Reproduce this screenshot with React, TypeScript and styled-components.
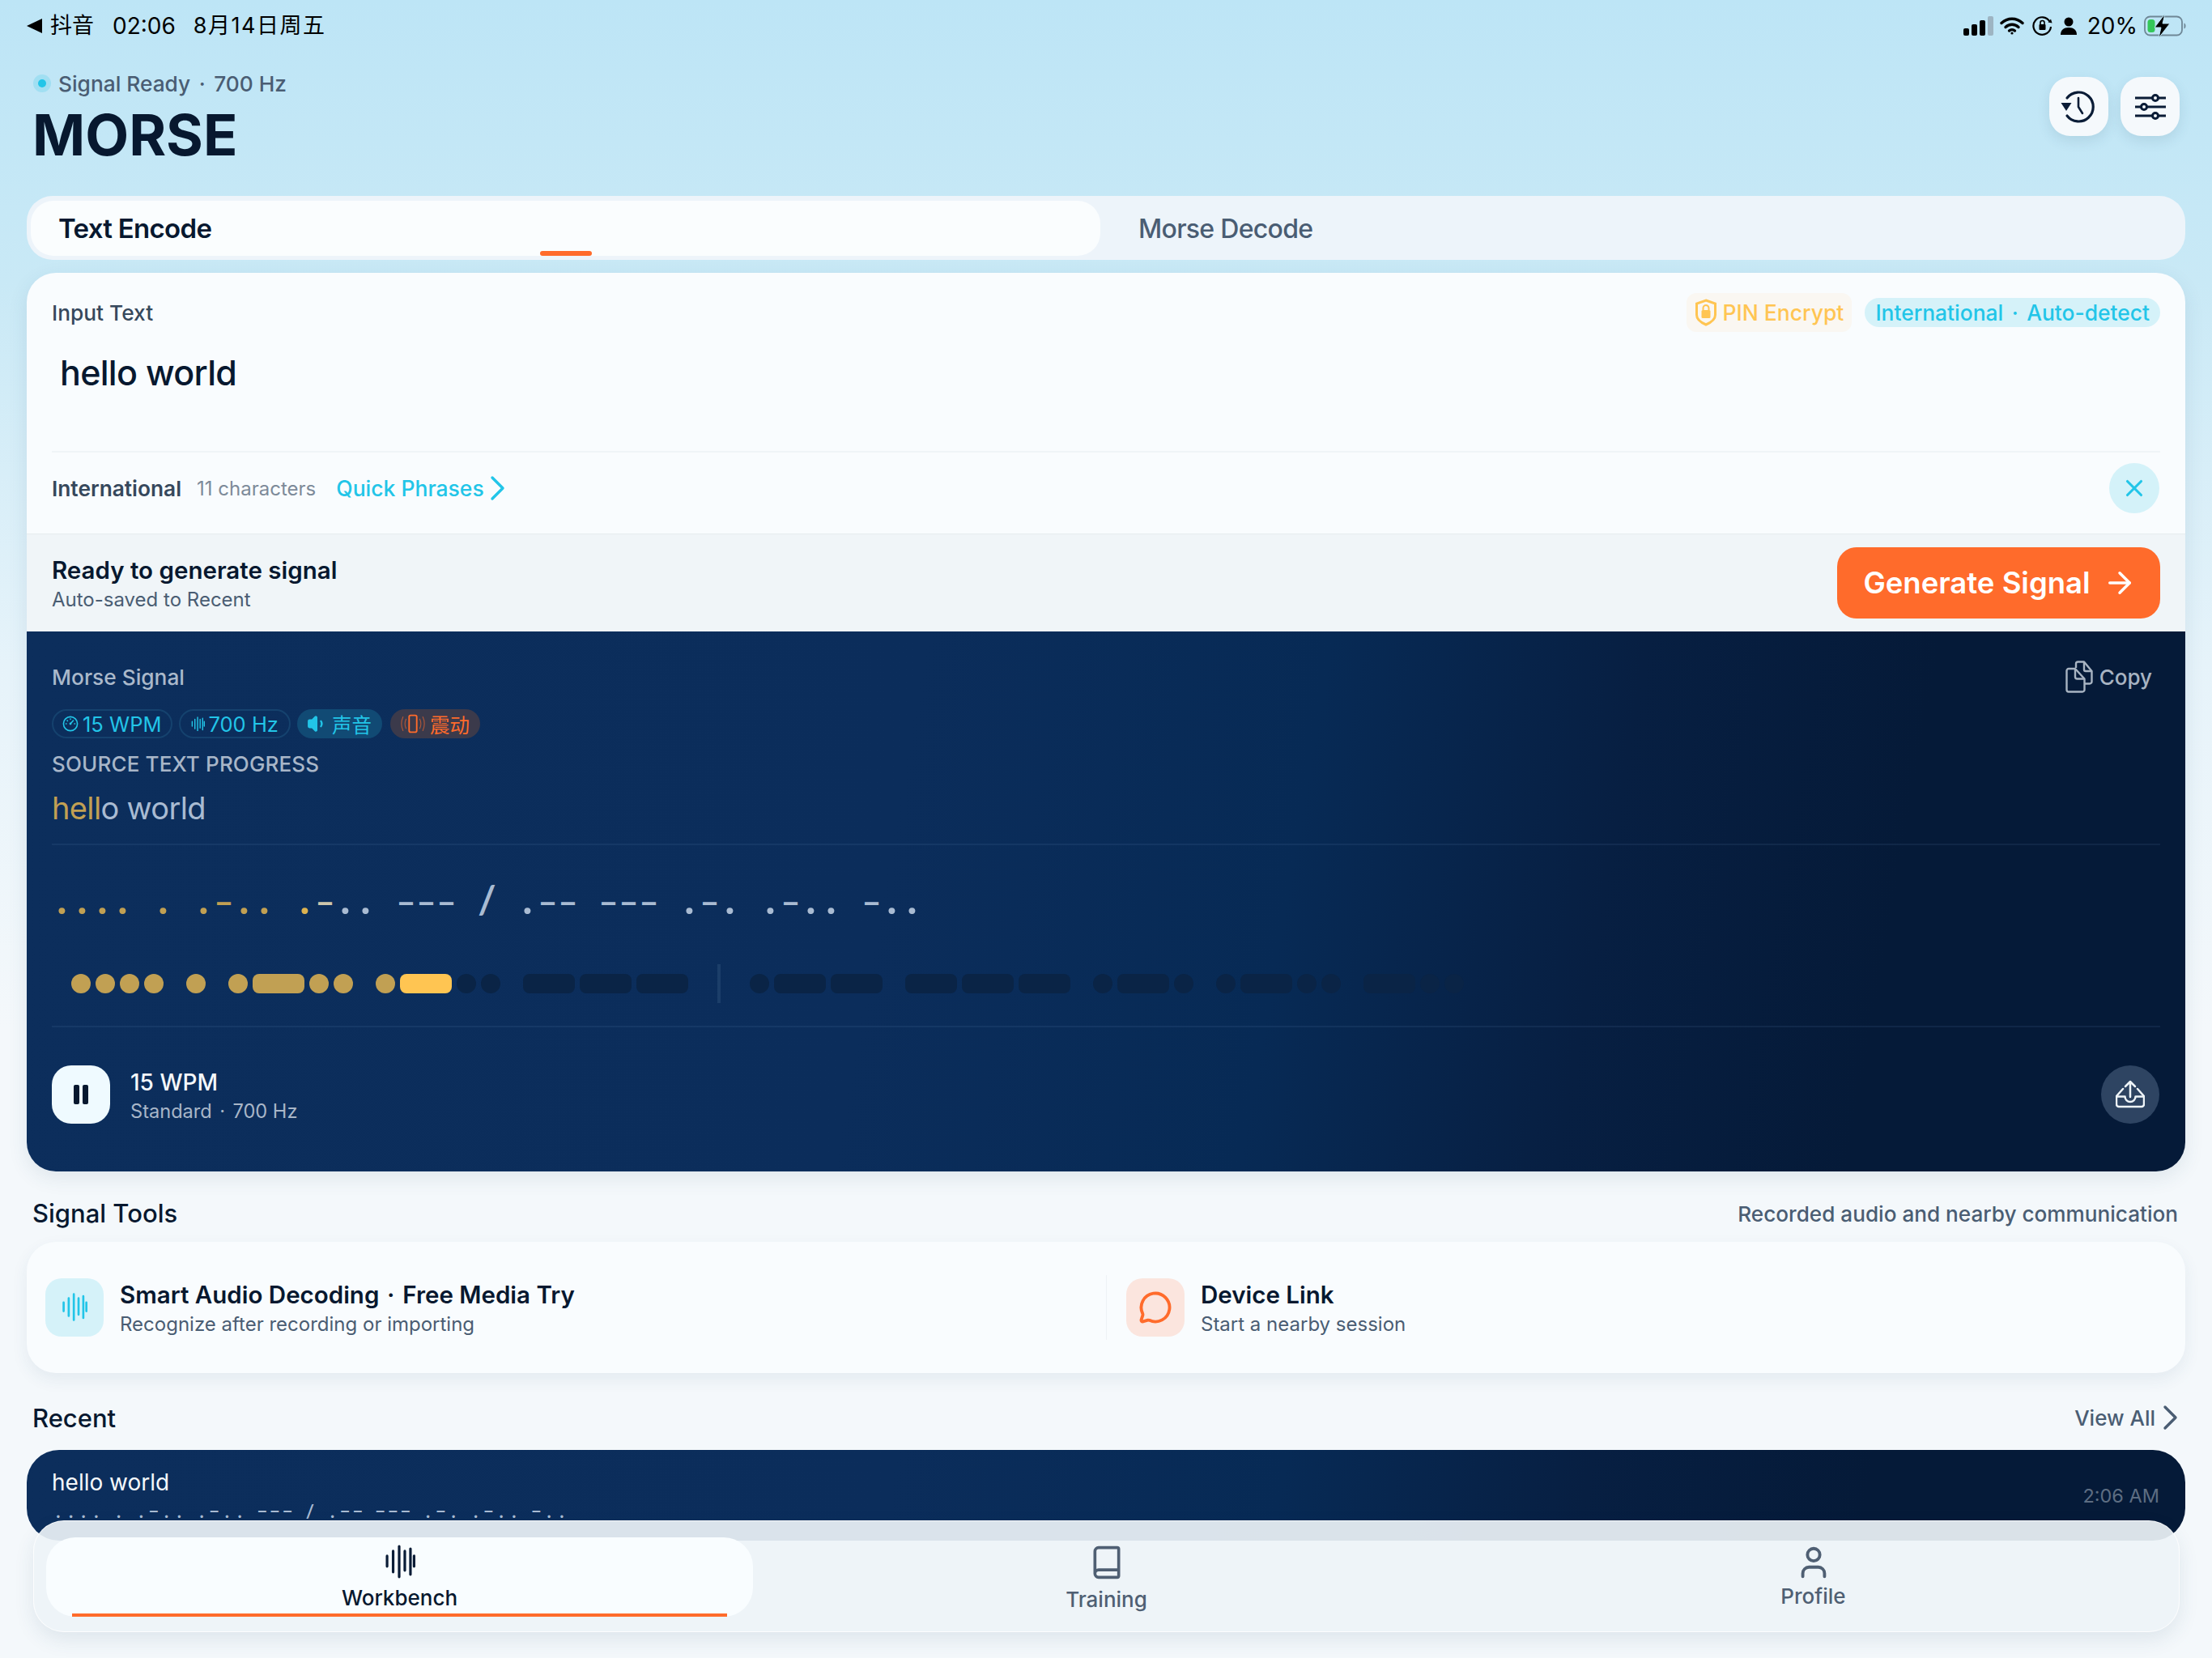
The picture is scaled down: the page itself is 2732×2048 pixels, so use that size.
import { Fragment } from 'react';
import styled, { createGlobalStyle } from 'styled-components';
import { ArrowRight, Book, MessageCircle, User, Volume1, X } from 'lucide-react';

const GlobalStyle = createGlobalStyle`
  html, body {
    margin: 0;
    padding: 0;
    background: #f4f8fb;
  }
  * {
    box-sizing: border-box;
  }
`;

const CJK = `Inter, "Noto Sans CJK SC", sans-serif`;

const WORDS = [
  ['....', '.', '.-..', '.-..', '---'],
  ['.--', '---', '.-.', '.-..', '-..'],
];
const MORSE_TEXT = '.... . .-.. .-.. --- / .-- --- .-. .-.. -..';

// how far playback got: index into MORSE_TEXT and into the flat list of bars
const charTone = (i: number) => {
  if (i < 12) return 'played';
  if (i === 12) return 'current';
  if (i === 13) return 'fresh';
  return 'idle';
};

const toGlyph = (c: string) => (c === '-' ? '−' : c === ' ' ? '\u00a0' : c);

const WaveIcon = ({ size, color }: { size: number; color: string }) => (
  <svg width={size} height={size * 1.1} viewBox="0 0 38 42" fill="none" stroke={color} strokeWidth="3.2" strokeLinecap="round">
    <path d="M3 14v13M10.500 8v26M18 2v38M25 8v24M32 5v32M36.500 14v13" />
  </svg>
);

const Chevron = ({ color }: { color: string }) => (
  <svg width="20" height="32" viewBox="0 0 20 32" fill="none" stroke={color} strokeWidth="3.4" strokeLinecap="round" strokeLinejoin="round">
    <path d="M4 3l13 13L4 29" />
  </svg>
);

const App = () => {
  let barIndex = 0;
  return (
    <>
      <GlobalStyle />
      <Page>
        <StatusBar>
          <StatusGroup>
            <BackTriangle />
            <StatusText>抖音</StatusText>
            <StatusTime>02:06</StatusTime>
            <StatusDate>8月14日周五</StatusDate>
          </StatusGroup>
          <StatusGroupRight>
            <SignalBars width="38" height="24" viewBox="0 0 38 24">
              <rect x="0" y="15" width="7" height="9" rx="2" fill="#000" />
              <rect x="10" y="10" width="7" height="14" rx="2" fill="#000" />
              <rect x="20" y="5" width="7" height="19" rx="2" fill="#000" />
              <rect x="30" y="0" width="7" height="24" rx="2" fill="#9db4c2" />
            </SignalBars>
            <svg width="30" height="24" viewBox="0 0 30 24" fill="none" stroke="#000" strokeWidth="3.4" strokeLinecap="round">
              <path d="M2 8.500c7.500-7 18.500-7 26 0" />
              <path d="M7 13.500c4.700-4.300 11.300-4.300 16 0" />
              <path d="M11.500 18c2-1.700 5-1.700 7 0" />
              <circle cx="15" cy="21" r="1.600" fill="#000" stroke="none" />
            </svg>
            <svg width="25" height="26" viewBox="0 0 25 26" fill="none" stroke="#000" strokeWidth="2.200">
              <path d="M21.500 7.500A10.800 10.800 0 1 0 23 14" />
              <path d="M24.500 9.500l-5-1 3.500-4z" fill="#000" stroke="none" />
              <rect x="8.500" y="11" width="8" height="7" rx="1" fill="#000" stroke="none" />
              <path d="M10 11V9a2.500 2.500 0 0 1 5 0v2" strokeWidth="1.600" />
            </svg>
            <svg width="20" height="22" viewBox="0 0 20 22" fill="#000">
              <circle cx="10" cy="6" r="5.500" />
              <path d="M0 22c0-6 4-9 10-9s10 3 10 9z" />
            </svg>
            <StatusPercent>20%</StatusPercent>
            <svg width="52" height="30" viewBox="0 0 52 30" fill="none">
              <rect x="1" y="3.500" width="46" height="23" rx="6.500" stroke="#6f8796" strokeWidth="1.800" />
              <rect x="4.500" y="7" width="9" height="16" rx="3.500" fill="#34c759" />
              <path d="M49.500 11.500c1.500.5 2 2 2 3.500s-.5 3-2 3.500z" fill="#6f8796" />
              <path d="M26 0L13 17h8l-3 13 14-18h-9z" fill="#000" stroke="#bee6f7" strokeWidth="1" />
            </svg>
          </StatusGroupRight>
        </StatusBar>

        <Header>
          <div>
            <SignalState>
              <SignalDot />
              <span>
                Signal Ready<Sep>·</Sep>700 Hz
              </span>
            </SignalState>
            <Title>MORSE</Title>
          </div>
          <HeaderActions>
            <RoundSquare>
              <svg width="46" height="44" viewBox="2 0 46 44" fill="none" stroke="#0a1c36" strokeWidth="3.200" strokeLinecap="round" strokeLinejoin="round">
                <path d="M10 11A18 18 0 1 1 10 33" />
                <path d="M2.500 17h13L9 27z" fill="#0a1c36" stroke="none" />
                <path d="M24 11v11l5 8" strokeWidth="2.600" />
              </svg>
            </RoundSquare>
            <RoundSquare>
              <svg width="38" height="32" viewBox="0 0 38 32" fill="none" stroke="#0a1c36" strokeWidth="3">
                <path d="M0 5h21M29 5h9M0 16h7M15 16h23M0 27h21M29 27h9" />
                <circle cx="25" cy="5" r="3.500" />
                <circle cx="11" cy="16" r="3.500" />
                <circle cx="25" cy="27" r="3.500" />
              </svg>
            </RoundSquare>
          </HeaderActions>
        </Header>

        <TabTrack>
          <ActiveTab>
            Text Encode
            <TabIndicator />
          </ActiveTab>
          <IdleTab>Morse Decode</IdleTab>
        </TabTrack>

        <MainCard>
          <InputSection>
            <InputHead>
              <FieldLabel>Input Text</FieldLabel>
              <HeadBadges>
                <PinBadge>
                  <svg width="28" height="34" viewBox="0 0 28 34" fill="none">
                    <path d="M14 2l11.500 4v14c0 5-4.500 9-11.500 12C7 29 2.500 25 2.500 20V6z" stroke="#ffc552" strokeWidth="3" />
                    <rect x="8.500" y="14" width="11" height="10" rx="1.500" fill="#ffc552" />
                    <path d="M10.500 14v-2.500a3.500 3.500 0 0 1 7 0V14" stroke="#ffc552" strokeWidth="2" />
                  </svg>
                  PIN Encrypt
                </PinBadge>
                <ModeBadge>
                  International<Sep>·</Sep>Auto-detect
                </ModeBadge>
              </HeadBadges>
            </InputHead>
            <InputValue>hello world</InputValue>
            <MetaRow>
              <MetaLeft>
                <MetaMode>International</MetaMode>
                <MetaCount>11 characters</MetaCount>
                <QuickLink>
                  Quick Phrases
                  <Chevron color="#22c5e8" />
                </QuickLink>
              </MetaLeft>
              <ClearButton>
                <X size={34} strokeWidth={2.2} />
              </ClearButton>
            </MetaRow>
          </InputSection>

          <ReadyBand>
            <div>
              <ReadyTitle>Ready to generate signal</ReadyTitle>
              <ReadySub>Auto-saved to Recent</ReadySub>
            </div>
            <GenerateButton>
              Generate Signal
              <ArrowRight size={42} strokeWidth={2} />
            </GenerateButton>
          </ReadyBand>

          <SignalPanel>
            <PanelHead>
              <PanelLabel>Morse Signal</PanelLabel>
              <CopyAction>
                <svg width="34" height="40" viewBox="0 0 34 40" fill="none" stroke="#a8b4c2" strokeWidth="2.400" strokeLinejoin="round">
                  <path d="M13 9V4a2.500 2.500 0 0 1 2.500-2.500H23L32.500 13v13a2.500 2.500 0 0 1-2.500 2.500h-6" />
                  <path d="M23 2v9a2 2 0 0 0 2 2h7" />
                  <path d="M1.500 12.500A2.500 2.500 0 0 1 4 10h8l11.500 12.500V36a2.500 2.500 0 0 1-2.500 2.500H4A2.500 2.500 0 0 1 1.500 36z" />
                  <path d="M12 10v10a2.500 2.500 0 0 0 2.500 2.500h9" />
                </svg>
                Copy
              </CopyAction>
            </PanelHead>

            <ChipRow>
              <OutlineChip>
                <svg width="20" height="20" viewBox="0 0 20 20" fill="none" stroke="#22c5e8" strokeWidth="1.600" strokeLinecap="round">
                  <circle cx="10" cy="10" r="8.600" />
                  <path d="M10 10l3.500-4M10 4v.5M4.500 10H5M15 10h.5M6 6l.4.4" />
                  <circle cx="10" cy="10" r="1.400" fill="#22c5e8" stroke="none" />
                </svg>
                15 WPM
              </OutlineChip>
              <OutlineChip $wide>
                <WaveIcon size={17} color="#22c5e8" />
                700 Hz
              </OutlineChip>
              <SoundChip>
                <Volume1 size={26} strokeWidth={2} fill="#22c5e8" />
                声音
              </SoundChip>
              <VibrateChip>
                <svg width="32" height="26" viewBox="-2 0 34 26" fill="none" stroke="#ff6b2b" strokeLinecap="round">
                  <rect x="10" y="2" width="10" height="22" rx="2" strokeWidth="2" />
                  <path d="M6 7c-1.700 3.500-1.700 8.500 0 12M2 4c-2.500 5.500-2.500 12.500 0 18M24 7c1.700 3.500 1.700 8.500 0 12M28 4c2.500 5.500 2.500 12.500 0 18" strokeWidth="1.200" opacity="0.6" />
                </svg>
                震动
              </VibrateChip>
            </ChipRow>

            <ProgressLabel>SOURCE TEXT PROGRESS</ProgressLabel>
            <SourceText>
              <SourceDone>hell</SourceDone>o world
            </SourceText>
            <PanelRule />

            <MorseLine>
              {MORSE_TEXT.split('').map((c, i) => (
                <MorseChar key={i} $tone={charTone(i)} $glyph={c}>
                  {toGlyph(c)}
                </MorseChar>
              ))}
            </MorseLine>

            <BarRow>
              {WORDS.map((word, w) => (
                <Fragment key={w}>
                  {w > 0 && <WordBreak />}
                  {word.map((letter, l) => (
                    <LetterGroup key={l}>
                      {letter.split('').map((sym, s) => {
                        const idx = barIndex++;
                        const state = idx < 10 ? 'played' : idx === 10 ? 'current' : 'idle';
                        return <SignalBar key={s} $dash={sym === '-'} $state={state} />;
                      })}
                    </LetterGroup>
                  ))}
                </Fragment>
              ))}
            </BarRow>
            <PanelRuleLower />

            <PlayerRow>
              <PlayerLeft>
                <PauseButton>
                  <PauseBar />
                  <PauseBar />
                </PauseButton>
                <div>
                  <PlayerSpeed>15 WPM</PlayerSpeed>
                  <PlayerSub>
                    Standard<Sep>·</Sep>700 Hz
                  </PlayerSub>
                </div>
              </PlayerLeft>
              <ShareButton>
                <svg width="36" height="36" viewBox="0 0 36 36" fill="none" stroke="#eef4f8" strokeWidth="2.500" strokeLinecap="round" strokeLinejoin="round">
                  <path d="M18 21V2M12 8l6-6 6 6" />
                  <path d="M9 11L1 20v10a3 3 0 0 0 3 3h28a3 3 0 0 0 3-3V20l-8-9" />
                  <path d="M1 20.500h10.500a6.500 6.500 0 0 0 13 0H35" />
                </svg>
              </ShareButton>
            </PlayerRow>
          </SignalPanel>
        </MainCard>

        <SectionHead>
          <SectionTitle>Signal Tools</SectionTitle>
          <SectionNote>Recorded audio and nearby communication</SectionNote>
        </SectionHead>

        <ToolCard>
          <ToolItem>
            <ToolIcon $tone="cyan">
              <WaveIcon size={32} color="#22c5e8" />
            </ToolIcon>
            <div>
              <ToolTitle>
                Smart Audio Decoding<ToolSep>·</ToolSep>Free Media Try
              </ToolTitle>
              <ToolSub>Recognize after recording or importing</ToolSub>
            </div>
          </ToolItem>
          <ToolItem $divided>
            <ToolIcon $tone="orange">
              <MessageCircle size={42} strokeWidth={2.2} color="#ff6b2b" />
            </ToolIcon>
            <div>
              <ToolTitle>Device Link</ToolTitle>
              <ToolSub>Start a nearby session</ToolSub>
            </div>
          </ToolItem>
        </ToolCard>

        <RecentHead>
          <SectionTitle>Recent</SectionTitle>
          <ViewAll>
            View All
            <Chevron color="#4a5d73" />
          </ViewAll>
        </RecentHead>

        <RecentCard>
          <div>
            <RecentText>hello world</RecentText>
            <RecentMorse>
              {MORSE_TEXT.split('').map((c, i) => (
                <RecentChar key={i} $space={c === ' '}>
                  {toGlyph(c)}
                </RecentChar>
              ))}
            </RecentMorse>
          </div>
          <RecentTime>2:06 AM</RecentTime>
        </RecentCard>

        <BottomNav>
          <NavItem $active>
            <WaveIcon size={38} color="#0a1c36" />
            <NavLabel $active>Workbench</NavLabel>
            <NavUnderline />
          </NavItem>
          <NavItem>
            <Book size={44} strokeWidth={2} color="#4f5f73" />
            <NavLabel>Training</NavLabel>
          </NavItem>
          <NavItem $profile>
            <User size={46} strokeWidth={2} color="#4f5f73" />
            <NavLabel>Profile</NavLabel>
          </NavItem>
        </BottomNav>
      </Page>
    </>
  );
};

const Page = styled.div`
  position: relative;
  width: 2732px;
  height: 2048px;
  overflow: hidden;
  font-family: Inter, sans-serif;
  background: linear-gradient(180deg, #bde5f6 0%, #c9e9f6 17%, #e6f3fa 40%, #f4f8fb 62%, #f4f8fb 100%);
`;

const Sep = styled.span`
  margin: 0 0.4em;
`;

const ToolSep = styled(Sep)`
  margin: 0 0.33em;
`;

const StatusBar = styled.div`
  display: flex;
  align-items: center;
  justify-content: space-between;
  height: 64px;
  padding: 0 32px 0 33px;
`;

const StatusGroup = styled.div`
  display: flex;
  align-items: center;
  color: #000;
`;

const StatusGroupRight = styled(StatusGroup)`
  gap: 10px;
`;

const SignalBars = styled.svg`
  margin-right: -3px;
`;

const BackTriangle = styled.span`
  width: 0;
  height: 0;
  margin-right: 10px;
  border-top: 9px solid transparent;
  border-bottom: 9px solid transparent;
  border-right: 19px solid #000;
`;

const StatusText = styled.span`
  font-family: ${CJK};
  font-size: 27px;
  line-height: 34px;
`;

const StatusDate = styled(StatusText)`
  letter-spacing: 1.5px;
`;

const StatusTime = styled.span`
  margin: 0 22px 0 23px;
  font-size: 28px;
  line-height: 34px;
`;

const StatusPercent = styled.span`
  margin: 0 -2px 0 3px;
  font-size: 28px;
  line-height: 34px;
`;

const Header = styled.div`
  display: flex;
  justify-content: space-between;
  height: 178px;
  padding: 21px 40px 0 40px;
`;

const SignalState = styled.div`
  display: flex;
  align-items: center;
  gap: 11px;
  height: 36px;
  padding-left: 1px;
  font-size: 26.3px;
  font-weight: 500;
  color: #4a5d73;
`;

const SignalDot = styled.span`
  width: 10px;
  height: 10px;
  margin: 0 4px 0 6px;
  border-radius: 50%;
  background: #22c5e8;
  box-shadow: 0 0 0 6px rgba(34, 197, 232, 0.2);
`;

const Title = styled.h1`
  margin: 8px 0 0;
  font-size: 70px;
  line-height: 76px;
  font-weight: 700;
  color: #07182f;
`;

const HeaderActions = styled.div`
  display: flex;
  gap: 15px;
  padding-top: 10px;
`;

const RoundSquare = styled.button`
  display: flex;
  align-items: center;
  justify-content: center;
  width: 73px;
  height: 73px;
  padding: 0;
  border: none;
  border-radius: 26px;
  background: #f5f9fc;
  box-shadow: 0 6px 16px rgba(40, 80, 110, 0.12);
`;

const TabTrack = styled.div`
  display: flex;
  height: 79px;
  margin: 0 33px;
  padding: 6px 5px 5px;
  border-radius: 32px;
  background: #edf4fa;
`;

const ActiveTab = styled.div`
  position: relative;
  display: flex;
  align-items: center;
  width: 1321px;
  padding-left: 34px;
  border-radius: 28px;
  background: #fafdfe;
  font-size: 33px;
  letter-spacing: -0.7px;
  font-weight: 600;
  color: #07182f;
`;

const TabIndicator = styled.span`
  position: absolute;
  left: 629px;
  bottom: 0;
  width: 64px;
  height: 6px;
  border-radius: 3px;
  background: #ff6b2b;
`;

const IdleTab = styled.div`
  display: flex;
  align-items: center;
  flex: 1;
  padding-left: 47px;
  font-size: 32px;
  letter-spacing: -0.7px;
  font-weight: 500;
  color: #4a5d73;
`;

const MainCard = styled.section`
  margin: 16px 33px 0;
  border-radius: 36px;
  overflow: hidden;
  background: #f9fcfe;
  box-shadow: 0 8px 24px rgba(40, 80, 110, 0.1);
`;

const InputSection = styled.div`
  height: 322px;
  padding: 25px 31px 0;
`;

const InputHead = styled.div`
  display: flex;
  align-items: center;
  justify-content: space-between;
  height: 48px;
`;

const FieldLabel = styled.span`
  font-size: 26.3px;
  font-weight: 500;
  color: #36485c;
`;

const HeadBadges = styled.div`
  display: flex;
  align-items: center;
  gap: 16px;
`;

const PinBadge = styled.span`
  display: flex;
  align-items: center;
  gap: 7px;
  height: 48px;
  padding: 0 10px;
  border-radius: 12px;
  background: #faf7f2;
  font-size: 26.5px;
  font-weight: 500;
  color: #ffc552;
`;

const ModeBadge = styled.span`
  display: flex;
  align-items: center;
  height: 36px;
  padding: 0 13px;
  border-radius: 18px;
  background: #d5f2f9;
  font-size: 26.4px;
  font-weight: 500;
  color: #22c5e8;
`;

const InputValue = styled.div`
  margin: 22px 0 0 10px;
  font-size: 43px;
  letter-spacing: -0.7px;
  line-height: 56px;
  font-weight: 500;
  color: #07182f;
`;

const MetaRow = styled.div`
  display: flex;
  align-items: center;
  justify-content: space-between;
  height: 90px;
  margin-top: 69px;
  border-top: 2px solid #f0f4f7;
`;

const MetaLeft = styled.div`
  display: flex;
  align-items: center;
`;

const MetaMode = styled.span`
  font-size: 26.3px;
  font-weight: 600;
  color: #36485c;
`;

const MetaCount = styled.span`
  margin-left: 19px;
  font-size: 24px;
  color: #7d8a99;
`;

const QuickLink = styled.span`
  display: flex;
  align-items: center;
  gap: 6px;
  margin-left: 25px;
  font-size: 26.5px;
  font-weight: 500;
  color: #22c5e8;
`;

const ClearButton = styled.span`
  display: flex;
  align-items: center;
  justify-content: center;
  width: 62px;
  height: 62px;
  margin-right: 1px;
  border-radius: 50%;
  background: #d4f2f9;
  color: #22c5e8;
`;

const ReadyBand = styled.div`
  display: flex;
  align-items: center;
  justify-content: space-between;
  height: 121px;
  padding: 0 31px;
  background: #f0f5f8;
  border-top: 1px solid #e6ecef;
`;

const ReadyTitle = styled.div`
  margin-top: 1px;
  font-size: 29.5px;
  line-height: 38px;
  font-weight: 600;
  color: #07182f;
`;

const ReadySub = styled.div`
  margin-top: 3px;
  font-size: 24px;
  line-height: 30px;
  color: #4a5d73;
`;

const GenerateButton = styled.button`
  display: flex;
  align-items: center;
  justify-content: center;
  gap: 15px;
  width: 399px;
  height: 88px;
  padding: 0 0 0 3px;
  border: none;
  border-radius: 24px;
  background: #ff6b2b;
  font-family: inherit;
  font-size: 36.5px;
  font-weight: 600;
  color: #fff;
`;

const SignalPanel = styled.div`
  height: 667px;
  padding: 36px 31px 0;
  background: linear-gradient(100deg, #0c2e5c 0%, #0b2d5b 40%, #072a55 58%, #071f42 72%, #051a38 85%, #051a38 100%);
`;

const PanelHead = styled.div`
  display: flex;
  align-items: center;
  justify-content: space-between;
  height: 40px;
`;

const PanelLabel = styled.span`
  font-size: 26.3px;
  font-weight: 500;
  color: #aab9cb;
`;

const CopyAction = styled.span`
  display: flex;
  align-items: center;
  gap: 8px;
  padding-right: 10px;
  font-size: 26px;
  font-weight: 500;
  color: #a8b4c2;
`;

const ChipRow = styled.div`
  display: flex;
  gap: 8px;
  margin-top: 20px;
`;

const OutlineChip = styled.span<{ $wide?: boolean }>`
  display: flex;
  align-items: center;
  gap: 5px;
  height: 36px;
  padding: 0 ${props => (props.$wide ? 13 : 11)}px;
  border: 2px solid #15426e;
  border-radius: 18px;
  font-size: 25.5px;
  color: #22c5e8;
`;

const SoundChip = styled.span`
  display: flex;
  align-items: center;
  gap: 5px;
  height: 36px;
  padding: 0 13px 0 12px;
  border-radius: 18px;
  background: #114a74;
  font-family: ${CJK};
  font-size: 24.5px;
  color: #22c5e8;
`;

const VibrateChip = styled(SoundChip)`
  margin-left: 2px;
  background: #3b3a4b;
  color: #ff6b2b;
`;

const ProgressLabel = styled.div`
  margin-top: 16px;
  font-size: 26px;
  line-height: 32px;
  font-weight: 500;
  letter-spacing: 0.15px;
  color: #a8b6c8;
`;

const SourceText = styled.div`
  margin-top: 13px;
  font-size: 38px;
  letter-spacing: -0.65px;
  line-height: 50px;
  color: #a9bbd2;
`;

const SourceDone = styled.span`
  color: #c1a053;
`;

const PanelRule = styled.div`
  height: 2px;
  margin-top: 19px;
  background: rgba(120, 160, 210, 0.1);
`;

const PanelRuleLower = styled(PanelRule)`
  margin-top: 28px;
`;

const MorseLine = styled.div`
  display: flex;
  align-items: baseline;
  height: 60px;
  margin-top: 35px;
  font-family: Lato, sans-serif;
  line-height: 60px;
`;

const MORSE_COLORS: Record<string, string> = {
  played: '#c1a053',
  current: '#dcb250',
  fresh: '#cdc6ac',
  idle: '#a9bbd2',
};

const MORSE_SIZES: Record<string, string> = {
  '.': 'font-size: 52px; font-weight: 700;',
  '-': 'font-size: 38px; font-weight: 900;',
  '/': 'font-size: 48px; font-weight: 700;',
  ' ': 'font-size: 38px;',
};

const MorseChar = styled.span<{ $tone: string; $glyph: string }>`
  flex: none;
  width: 25px;
  text-align: center;
  ${props => MORSE_SIZES[props.$glyph]}
  color: ${props => MORSE_COLORS[props.$tone]};
`;

const BarRow = styled.div`
  display: flex;
  align-items: center;
  gap: 28px;
  height: 48px;
  margin-top: 52px;
  padding-left: 24px;
`;

const LetterGroup = styled.div`
  display: flex;
  gap: 6px;
`;

const WordBreak = styled.span`
  width: 4px;
  height: 48px;
  margin: 0 8px;
  background: #1b3e69;
`;

const BAR_COLORS: Record<string, string> = {
  played: '#c1a053',
  current: '#ffc552',
  idle: '#0a2446',
};

const SignalBar = styled.span<{ $dash: boolean; $state: string }>`
  width: ${props => (props.$dash ? 64 : 24)}px;
  height: 24px;
  border-radius: ${props => (props.$dash ? 8 : 12)}px;
  background: ${props => BAR_COLORS[props.$state]};
`;

const PlayerRow = styled.div`
  display: flex;
  align-items: center;
  justify-content: space-between;
  height: 72px;
  margin-top: 47px;
`;

const PlayerLeft = styled.div`
  display: flex;
  align-items: center;
  gap: 25px;
`;

const PauseButton = styled.span`
  display: flex;
  align-items: center;
  justify-content: center;
  gap: 4px;
  width: 72px;
  height: 72px;
  border-radius: 24px;
  background: #effaff;
`;

const PauseBar = styled.span`
  width: 7px;
  height: 24px;
  border-radius: 2px;
  background: #07182f;
`;

const PlayerSpeed = styled.div`
  margin-top: 2px;
  font-size: 28px;
  line-height: 38px;
  font-weight: 500;
  color: #f4f8fb;
`;

const PlayerSub = styled.div`
  font-size: 23.6px;
  line-height: 32px;
  margin-top: 1px;
  color: #a8b6c8;
`;

const ShareButton = styled.span`
  display: flex;
  align-items: center;
  justify-content: center;
  width: 72px;
  height: 72px;
  margin-right: 1px;
  border-radius: 50%;
  background: #2e4462;
`;

const SectionHead = styled.div`
  display: flex;
  align-items: center;
  justify-content: space-between;
  height: 40px;
  margin-top: 31px;
  padding: 0 42px 0 40px;
`;

const RecentHead = styled(SectionHead)`
  margin-top: 35px;
`;

const SectionTitle = styled.h2`
  margin: 0;
  font-size: 31px;
  font-weight: 500;
  color: #07182f;
`;

const SectionNote = styled.span`
  margin-top: 2px;
  font-size: 26.15px;
  font-weight: 500;
  color: #4a5d73;
`;

const ViewAll = styled.span`
  display: flex;
  align-items: center;
  gap: 8px;
  font-size: 26px;
  font-weight: 500;
  color: #4a5d73;
`;

const ToolCard = styled.section`
  display: grid;
  grid-template-columns: 1fr 1fr;
  align-items: center;
  height: 162px;
  margin: 16px 33px 0;
  border-radius: 36px;
  background: #f9fcfe;
  box-shadow: 0 8px 20px rgba(40, 80, 110, 0.08);
`;

const ToolItem = styled.div<{ $divided?: boolean }>`
  display: flex;
  align-items: center;
  gap: 20px;
  height: 80px;
  padding-left: ${props => (props.$divided ? 24 : 23)}px;
  border-left: ${props => (props.$divided ? '1px solid #eef2f5' : 'none')};
`;

const ToolIcon = styled.span<{ $tone: 'cyan' | 'orange' }>`
  display: flex;
  align-items: center;
  justify-content: center;
  width: 72px;
  height: 72px;
  border-radius: 20px;
  background: ${props => (props.$tone === 'cyan' ? '#d5f2f9' : '#fbe5de')};
`;

const ToolTitle = styled.div`
  margin-top: 1px;
  font-size: 29.5px;
  line-height: 38px;
  font-weight: 600;
  color: #07182f;
`;

const ToolSub = styled.div`
  margin-top: 2px;
  font-size: 24px;
  line-height: 32px;
  color: #4a5d73;
`;

const RecentCard = styled.section`
  display: flex;
  justify-content: space-between;
  height: 112px;
  margin: 20px 33px 0;
  padding: 20px 32px 0 31px;
  border-radius: 40px;
  overflow: hidden;
  background: linear-gradient(100deg, #0c2e5c 0%, #0b2d5b 40%, #072a55 58%, #071f42 72%, #051a38 85%, #051a38 100%);
`;

const RecentText = styled.div`
  font-size: 28px;
  line-height: 40px;
  color: #f4f8fb;
`;

const RecentMorse = styled.div`
  display: flex;
  font-family: Lato, sans-serif;
  font-size: 22px;
  line-height: 32px;
  font-weight: 700;
  color: #a9bbd2;
`;

const RecentChar = styled.span<{ $space: boolean }>`
  flex: none;
  width: ${props => (props.$space ? 12 : 15.7)}px;
  text-align: center;
`;

const RecentTime = styled.div`
  padding-top: 21px;
  font-size: 23.5px;
  line-height: 32px;
  color: #5d6d82;
`;

const BottomNav = styled.nav`
  position: absolute;
  left: 41px;
  top: 1878px;
  display: grid;
  grid-template-columns: repeat(3, 1fr);
  width: 2651px;
  height: 138px;
  padding: 20px 15px 0;
  border: 1px solid rgba(255, 255, 255, 0.8);
  border-radius: 38px;
  background: rgba(237, 243, 247, 0.92);
  box-shadow: 0 10px 24px rgba(40, 80, 110, 0.1);
`;

const NavItem = styled.div<{ $active?: boolean; $profile?: boolean }>`
  position: relative;
  display: flex;
  flex-direction: column;
  align-items: center;
  height: 98px;
  padding-top: ${props => (props.$profile ? 8 : 9)}px;
  gap: ${props => (props.$profile ? 2 : 7)}px;
  border-radius: 36px;
  background: ${props => (props.$active ? '#f9fdff' : 'transparent')};
`;

const NavLabel = styled.span<{ $active?: boolean }>`
  font-size: 26px;
  line-height: 34px;
  font-weight: 500;
  color: ${props => (props.$active ? '#07182f' : '#4f5f73')};
`;

const NavUnderline = styled.span`
  position: absolute;
  left: 32px;
  right: 32px;
  bottom: 0;
  height: 4px;
  background: #ff6b2b;
`;

export default App;
